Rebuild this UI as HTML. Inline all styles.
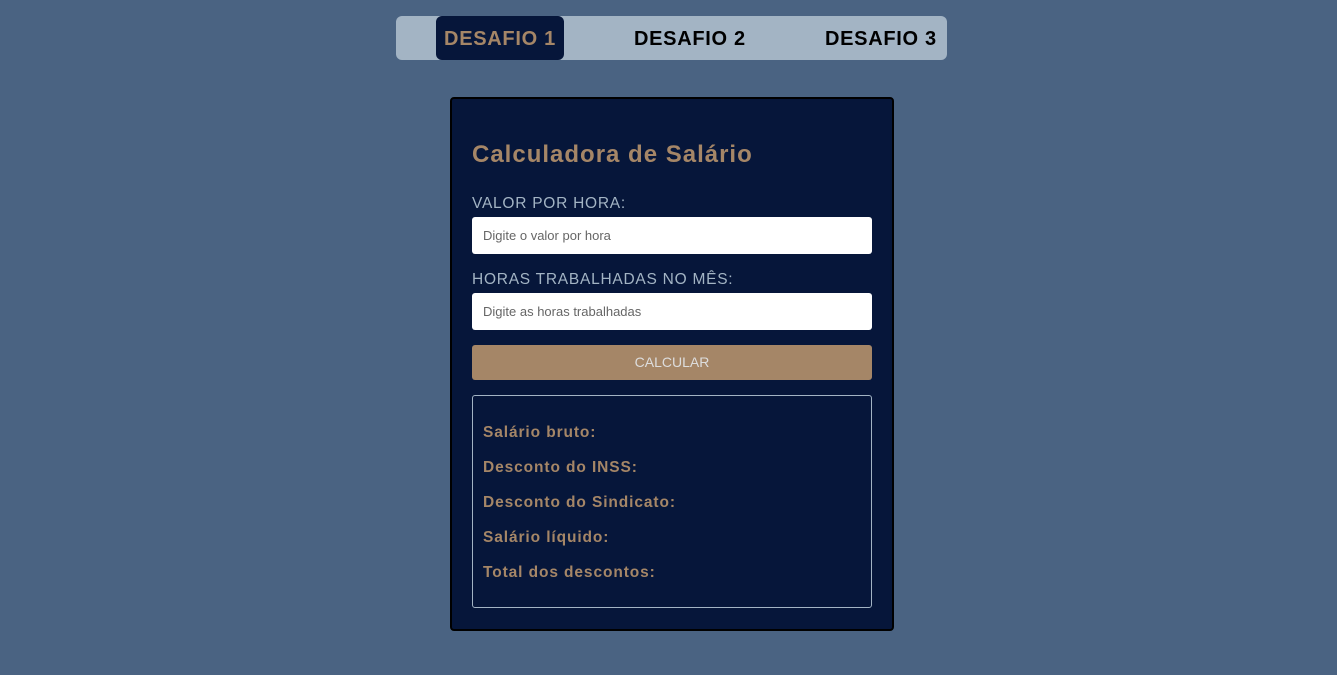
<!DOCTYPE html>
<html><head><meta charset="utf-8"><style>
*{margin:0;padding:0;box-sizing:border-box}
body{width:1337px;height:675px;background:#4a6382;font-family:"Liberation Sans",sans-serif;position:relative;overflow:hidden}
.nav{position:absolute;left:396px;top:16px;width:551px;height:44px;background:#a3b4c4;border-radius:6px}
.tab{position:absolute;top:1px;height:44px;line-height:44px;font-weight:bold;font-size:20px;color:#000;white-space:nowrap;letter-spacing:0.7px}
.t1{top:0;left:40px;width:128px;background:#06163a;color:#a58667;border-radius:6px;text-align:center;line-height:46px}
.card{position:absolute;left:450px;top:97px;width:444px;height:534px;background:#06163a;border:2px solid #000;border-radius:4px}
h1{position:absolute;left:20px;top:42px;font-size:24px;color:#a58667;font-weight:bold;letter-spacing:1px}
.lbl{position:absolute;left:20px;font-size:15.5px;color:#a3b4c4;letter-spacing:0.75px}
.inp{position:absolute;left:20px;width:400px;height:37px;background:#fff;border-radius:3px;font-size:13px;color:#666;padding-left:11px;line-height:37px}
.btn{position:absolute;left:20px;top:246px;width:400px;height:35px;background:#a58667;border-radius:3px;color:#ddd;font-size:14px;text-align:center;line-height:35px}
.res{position:absolute;left:20px;top:296px;width:400px;height:213px;border:1px solid #a3b4c4;border-radius:3px}
.res p{position:absolute;left:10px;font-weight:bold;font-size:15.5px;color:#a58667;letter-spacing:0.9px}
</style></head><body>
<div class="nav">
<div class="tab t1">DESAFIO 1</div>
<div class="tab" style="left:238px">DESAFIO 2</div>
<div class="tab" style="left:429px">DESAFIO 3</div>
</div>
<div class="card">
<h1>Calculadora de Salário</h1>
<div class="lbl" style="top:96px">VALOR POR HORA:</div>
<div class="inp" style="top:118px">Digite o valor por hora</div>
<div class="lbl" style="top:172px">HORAS TRABALHADAS NO MÊS:</div>
<div class="inp" style="top:194px">Digite as horas trabalhadas</div>
<div class="btn">CALCULAR</div>
<div class="res">
<p style="top:28px">Salário bruto:</p>
<p style="top:63px">Desconto do INSS:</p>
<p style="top:98px">Desconto do Sindicato:</p>
<p style="top:133px">Salário líquido:</p>
<p style="top:168px">Total dos descontos:</p>
</div>
</div>
</body></html>
